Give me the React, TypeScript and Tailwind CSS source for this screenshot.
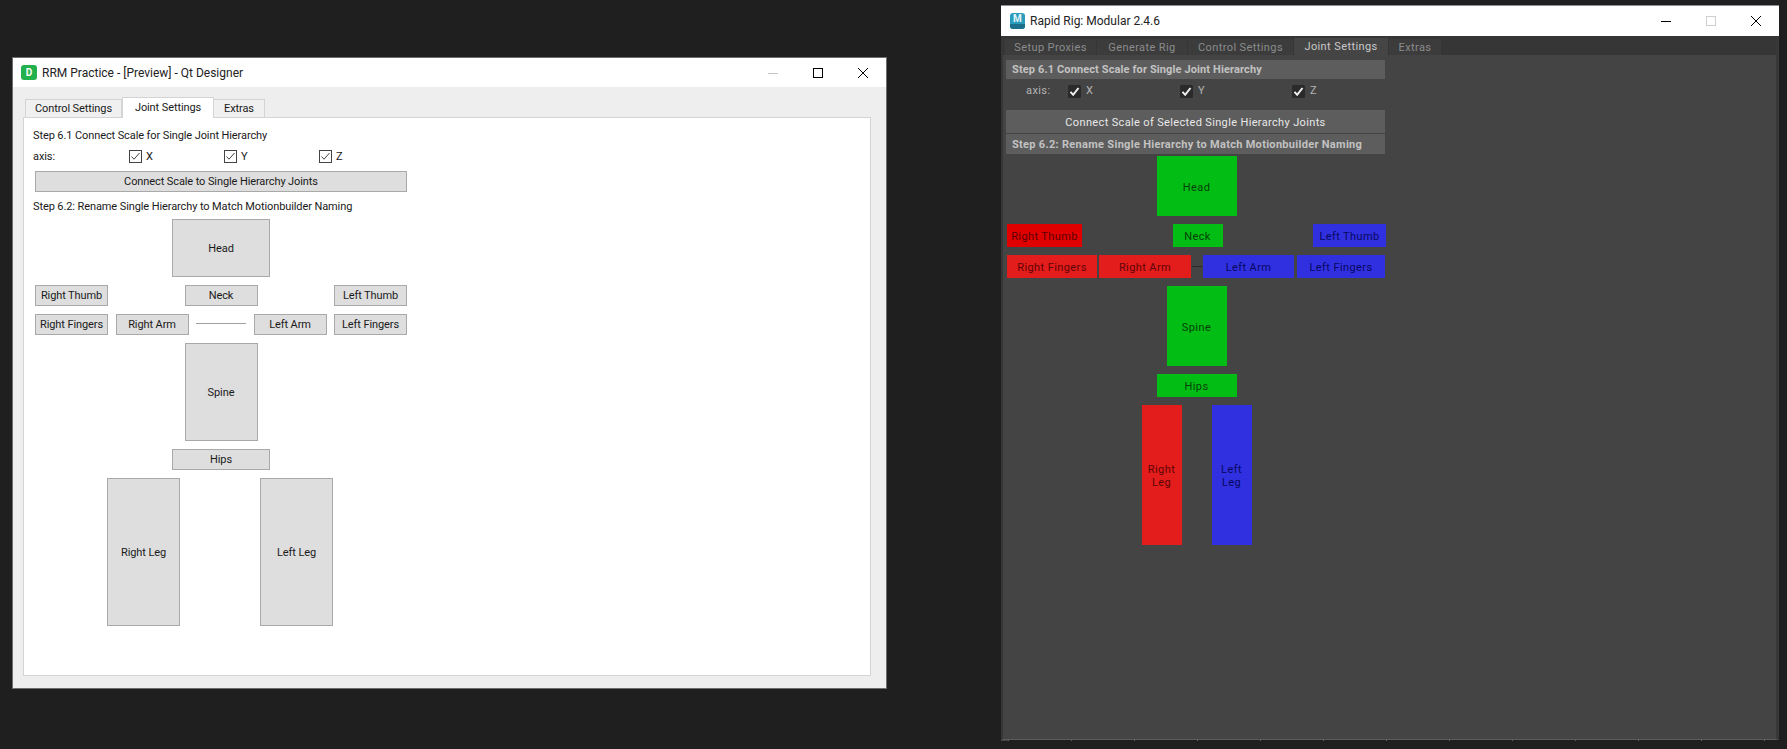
import type { ReactNode } from "react"

const Check = ({ dark }: { dark?: boolean }) =>
  dark ? (
    <svg viewBox="0 0 13 13" className="w-[13px] h-[13px] shrink-0">
      <rect x="0" y="0" width="13" height="13" rx="1.5" fill="#2a2a2a" />
      <path d="M2.5 6.8 L5.2 9.8 L10.5 3" fill="none" stroke="#f2f2f2" strokeWidth="2" />
    </svg>
  ) : (
    <svg viewBox="0 0 13 13" className="w-[13px] h-[13px] shrink-0">
      <rect x="0.5" y="0.5" width="12" height="12" fill="#fff" stroke="#444" />
      <path d="M2.5 6.5 L5 9.2 L10.5 3" fill="none" stroke="#444" strokeWidth="1" />
    </svg>
  )

const MinIcon = ({ className }: { className: string }) => (
  <svg viewBox="0 0 10 10" className={`w-[10px] h-[10px] ${className}`}>
    <path d="M0 5.5 H10" stroke="currentColor" strokeWidth="1" />
  </svg>
)

const MaxIcon = ({ className }: { className: string }) => (
  <svg viewBox="0 0 10 10" className={`w-[10px] h-[10px] ${className}`}>
    <rect x="0.5" y="0.5" width="9" height="9" fill="none" stroke="currentColor" />
  </svg>
)

const CloseIcon = () => (
  <svg viewBox="0 0 10 10" className="w-[10px] h-[10px] text-black">
    <path d="M0 0 L10 10 M10 0 L0 10" stroke="currentColor" strokeWidth="1" />
  </svg>
)

// Qt Designer preview button
const QtBtn = ({ className, children }: { className: string; children: ReactNode }) => (
  <button className={`flex items-center justify-center shrink-0 pt-[2px] bg-[#dedede] border border-[#a9a9a9] text-[#1a1a1a] ${className}`}>
    {children}
  </button>
)

const DesignerWindow = () => (
  <div className="ml-[12px] mt-[57px] w-[875px] h-[632px] flex flex-col bg-[#eeeeee] border border-[#6e6e6e] font-['Roboto',sans-serif] text-[11px] tracking-[-0.1px] text-[#1a1a1a]">
    {/* Title bar */}
    <div className="h-[29px] shrink-0 bg-white flex items-center pl-[8px] tracking-normal">
      <div className="w-[16px] h-[15px] rounded-[3px] bg-[#22b14c] text-white text-[10px] font-bold flex items-center justify-center">D</div>
      <span className="ml-[5px] text-[12px] text-[#222]">RRM Practice - [Preview] - Qt Designer</span>
      <div className="ml-auto flex items-center gap-[35px] pr-[18px]">
        <MinIcon className="text-[#c4c4c4]" />
        <MaxIcon className="text-black" />
        <CloseIcon />
      </div>
    </div>

    <div className="flex-1 flex flex-col pl-[10px] pr-[15px] pb-[12px] pt-[10px]">
      {/* Tabs */}
      <div className="h-[20px] shrink-0 flex items-end pl-[2px] relative z-10">
        <div className="h-[18px] w-[97px] pt-[2px] bg-[#f0f0f0] border border-b-0 border-[#d4d4d4] flex items-center justify-center">Control Settings</div>
        <div className="h-[21px] w-[92px] bg-white border border-b-0 border-[#d4d4d4] -mb-px flex items-center justify-center">Joint Settings</div>
        <div className="h-[18px] w-[51px] pt-[2px] bg-[#f0f0f0] border border-b-0 border-l-0 border-[#d4d4d4] flex items-center justify-center">Extras</div>
      </div>

      {/* Panel */}
      <div className="flex-1 bg-white border border-[#d4d4d4] pl-[11px] pt-[8px]">
        <div className="h-[18px] pt-[2px] -ml-[2px] flex items-center">Step 6.1 Connect Scale for Single Joint Hierarchy</div>
        <div className="h-[18px] mt-[3px] -ml-[2px] flex items-center">
          <span className="w-[96px] pt-[2px]">axis:</span>
          <div className="w-[95px] flex items-center gap-[4px]"><Check /><span className="pt-[2px]">X</span></div>
          <div className="w-[95px] flex items-center gap-[4px]"><Check /><span className="pt-[2px]">Y</span></div>
          <div className="w-[95px] flex items-center gap-[4px]"><Check /><span className="pt-[2px]">Z</span></div>
        </div>
        <QtBtn className="w-[372px] h-[21px] mt-[6px]">Connect Scale to Single Hierarchy Joints</QtBtn>
        <div className="h-[18px] pt-[2px] mt-[5px] -ml-[2px] flex items-center">Step 6.2: Rename Single Hierarchy to Match Motionbuilder Naming</div>

        {/* Body map */}
        <div className="w-[372px] mt-[4px] flex flex-col items-center gap-[8px]">
          <QtBtn className="w-[98px] h-[58px]">Head</QtBtn>
          <div className="w-full flex justify-between">
            <QtBtn className="w-[73px] h-[21px]">Right Thumb</QtBtn>
            <QtBtn className="w-[73px] h-[21px]">Neck</QtBtn>
            <QtBtn className="w-[73px] h-[21px]">Left Thumb</QtBtn>
          </div>
          <div className="w-full flex items-center justify-between">
            <QtBtn className="w-[73px] h-[21px]">Right Fingers</QtBtn>
            <QtBtn className="w-[73px] h-[21px]">Right Arm</QtBtn>
            <div className="w-[50px] h-px bg-[#a0a0a0] -mt-[3px]" />
            <QtBtn className="w-[73px] h-[21px]">Left Arm</QtBtn>
            <QtBtn className="w-[73px] h-[21px]">Left Fingers</QtBtn>
          </div>
          <QtBtn className="w-[73px] h-[98px]">Spine</QtBtn>
          <QtBtn className="w-[98px] h-[21px]">Hips</QtBtn>
          <div className="flex gap-[80px] mr-[2px]">
            <QtBtn className="w-[73px] h-[148px]">Right Leg</QtBtn>
            <QtBtn className="w-[73px] h-[148px]">Left Leg</QtBtn>
          </div>
        </div>
      </div>
    </div>
  </div>
)

const RigBtn = ({ className, children }: { className: string; children: ReactNode }) => (
  <button className={`flex items-center justify-center shrink-0 pt-[2px] text-center leading-[13px] ${className}`}>
    {children}
  </button>
)

const RED = "bg-[#e31c1c] text-[#5e0505]"
const GREEN = "bg-[#02bd14] text-[#033f08]"
const BLUE = "bg-[#3030e0] text-[#080860]"

const RigWindow = () => (
  <div className="ml-[114px] mt-[5px] w-[778px] h-[736px] flex flex-col bg-[#444444] font-['Roboto',sans-serif] text-[11px] tracking-[0.4px]">
    {/* Title bar */}
    <div className="h-[31px] shrink-0 bg-white flex items-center pl-[9px] border-t border-[#8a9096] tracking-normal">
      <div className="w-[15px] h-[16px] rounded-[3px] overflow-hidden bg-[#2b9cbc] flex flex-col items-center text-[#e6f6fa] text-[10px] font-bold leading-[11px]">
        M
        <div className="w-full flex-1 bg-[#1c6f8a]" />
      </div>
      <span className="ml-[5px] text-[12px] text-[#222]">Rapid Rig: Modular 2.4.6</span>
      <div className="ml-auto flex items-center gap-[35px] pr-[18px]">
        <MinIcon className="text-black" />
        <MaxIcon className="text-[#cfcfcf]" />
        <CloseIcon />
      </div>
    </div>

    <div className="flex-1 flex flex-col border-l-2 border-r-[3px] border-b border-l-[#363636] border-r-[#383838] border-b-[#5c5c5c]">
      {/* Tabs */}
      <div className="h-[19px] shrink-0 bg-[#363636] flex items-end gap-[1px] pl-[2px] text-[#8b8b8b]">
        <div className="w-[91px] h-[16px] pt-[2px] bg-[#3c3c3c] flex items-center justify-center">Setup Proxies</div>
        <div className="w-[90px] h-[16px] pt-[2px] bg-[#3c3c3c] flex items-center justify-center">Generate Rig</div>
        <div className="w-[105px] h-[16px] pt-[2px] bg-[#3c3c3c] flex items-center justify-center">Control Settings</div>
        <div className="w-[94px] h-[17px] pt-[2px] bg-[#454545] text-[#c9c9c9] flex items-center justify-center">Joint Settings</div>
        <div className="w-[52px] h-[16px] pt-[2px] bg-[#3c3c3c] flex items-center justify-center">Extras</div>
      </div>

      {/* Panel */}
      <div className="flex-1 pl-[3px] pt-[5px]">
        <div className="w-[379px] h-[19px] pt-[2px] bg-[#5d5d5d] text-[#c2c2c2] font-bold tracking-[0.12px] pl-[6px] flex items-center whitespace-nowrap">Step 6.1 Connect Scale for Single Joint Hierarchy</div>
        <div className="h-[23px] mt-[1px] flex items-center text-[#b4b4b4]">
          <span className="w-[62px] pl-[20px]">axis:</span>
          <div className="w-[112px] flex items-center gap-[5px]"><Check dark />X</div>
          <div className="w-[112px] flex items-center gap-[5px]"><Check dark />Y</div>
          <div className="w-[112px] flex items-center gap-[5px]"><Check dark />Z</div>
        </div>
        <RigBtn className="w-[379px] h-[23px] mt-[7px] bg-[#5d5d5d] text-[#e8e8e8] tracking-[0.35px]">Connect Scale of Selected Single Hierarchy Joints</RigBtn>
        <div className="w-[379px] h-[20px] mt-[1px] pt-[2px] bg-[#5d5d5d] text-[#c2c2c2] font-bold tracking-[0.3px] pl-[6px] flex items-center whitespace-nowrap">Step 6.2: Rename Single Hierarchy to Match Motionbuilder Naming</div>

        {/* Body map */}
        <div className="w-[379px] ml-[1px] mt-[2px] flex flex-col items-center gap-[8px]">
          <RigBtn className={`w-[80px] h-[60px] ${GREEN}`}>Head</RigBtn>
          <div className="w-full flex justify-between">
            <RigBtn className="w-[75px] h-[23px] bg-[#e00000] text-[#5e0000]">Right Thumb</RigBtn>
            <RigBtn className={`w-[50px] h-[23px] ${GREEN}`}>Neck</RigBtn>
            <RigBtn className={`w-[73px] h-[23px] ${BLUE}`}>Left Thumb</RigBtn>
          </div>
          <div className="w-full flex items-center">
            <RigBtn className={`w-[90px] h-[23px] ${RED}`}>Right Fingers</RigBtn>
            <RigBtn className={`w-[92px] h-[23px] ml-[2px] ${RED}`}>Right Arm</RigBtn>
            <div className="w-[10px] h-px bg-[#2a2a2a] mx-[1px]" />
            <RigBtn className={`w-[91px] h-[23px] ${BLUE}`}>Left Arm</RigBtn>
            <RigBtn className={`w-[88px] h-[23px] ml-[3px] ${BLUE}`}>Left Fingers</RigBtn>
          </div>
          <RigBtn className={`w-[60px] h-[80px] ${GREEN}`}>Spine</RigBtn>
          <RigBtn className={`w-[80px] h-[23px] ${GREEN}`}>Hips</RigBtn>
          <div className="flex gap-[30px]">
            <RigBtn className={`w-[40px] h-[140px] ${RED}`}>Right<br />Leg</RigBtn>
            <RigBtn className={`w-[40px] h-[140px] ${BLUE}`}>Left<br />Leg</RigBtn>
          </div>
        </div>
      </div>
    </div>
    {/* faint resize ticks under the bottom edge */}
    <div className="h-px shrink-0 ml-[7px] bg-[repeating-linear-gradient(90deg,#666666_0_1px,#1f1f1f_1px_63px)]" />
  </div>
)

export default function App() {
  return (
    <div className="w-[1787px] h-[749px] overflow-hidden flex items-start bg-[#1f1f1f]">
      <DesignerWindow />
      <RigWindow />
    </div>
  )
}
